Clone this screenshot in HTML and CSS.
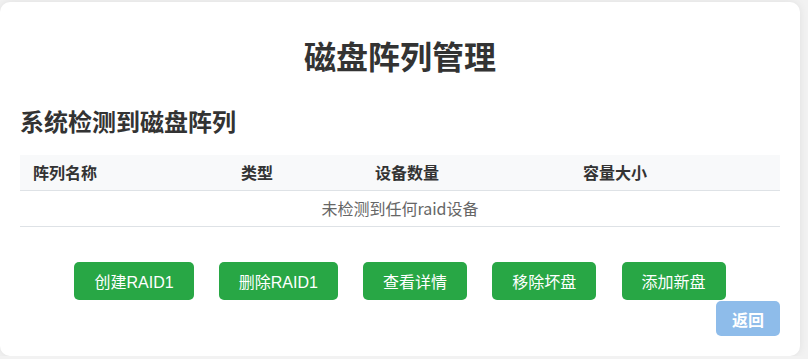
FILE: index.html
```html
<!DOCTYPE html>
<html lang="zh-CN">
<head>
  <meta charset="UTF-8" />
  <title>磁盘阵列管理</title>
  <link rel="stylesheet" href="styles.css">
</head>
<body>

  <div class="container">
    <h1>磁盘阵列管理</h1>

    <h2>系统检测到磁盘阵列</h2>

    <table class="raid-table">
      <thead>
        <tr>
          <th class="col-name">阵列名称</th>
          <th class="col-type">类型</th>
          <th class="col-count">设备数量</th>
          <th class="col-size">容量大小</th>
        </tr>
      </thead>
      <tbody>
        <tr>
          <td colspan="4" class="empty">未检测到任何raid设备</td>
        </tr>
      </tbody>
    </table>

    <div class="actions">
      <button class="btn">创建RAID1</button>
      <button class="btn">删除RAID1</button>
      <button class="btn">查看详情</button>
      <button class="btn">移除坏盘</button>
      <button class="btn">添加新盘</button>
    </div>

    <div class="footer-row">
      <button class="btn-back">返回</button>
    </div>
  </div>

</body>
</html>
```

FILE: styles.css
```css
body {
  margin: 0;
  font-family: "Noto Sans CJK SC", "Liberation Sans", sans-serif;
  background: #f2f2f2;
  color: #333;
}

.container {
  width: 800px;
  box-sizing: border-box;
  margin: 2px 0 0 0;
  padding: 20px;
  background: #fff;
  border-radius: 10px;
  box-shadow: 0 0 8px rgba(0, 0, 0, 0.08);
}

h1 {
  text-align: center;
  font-size: 32px;
  font-weight: bold;
  margin: 11px 0 26px;
  line-height: 1.4;
}

h2 {
  font-size: 24px;
  font-weight: bold;
  margin: 0 0 18px;
  line-height: 1.4;
}

.raid-table {
  width: 100%;
  border-collapse: collapse;
  font-size: 16px;
}

.raid-table th {
  background: #f8f9fa;
  text-align: left;
  font-weight: bold;
  padding: 6px 13px;
  line-height: 23px;
  border-bottom: 1px solid #dee2e6;
}

.col-name { width: 182px; }
.col-type { width: 108px; }
.col-count { width: 182px; }

.raid-table td {
  padding: 6px 12px;
  line-height: 23px;
  border-bottom: 1px solid #dee2e6;
}

.empty {
  text-align: center;
  color: #666;
}

.actions {
  text-align: center;
  margin-top: 35px;
  font-size: 0;
}

.btn {
  font-family: "Liberation Sans", "Noto Sans CJK SC", sans-serif;
  background: #28a745;
  color: #fff;
  border: none;
  border-radius: 5px;
  font-size: 16px;
  height: 38px;
  padding: 0 20px;
  margin: 0 12.6px;
  cursor: pointer;
}

.footer-row {
  display: flex;
  justify-content: flex-end;
}

.btn-back {
  font-family: "Noto Sans CJK SC", sans-serif;
  background: #8ebcea;
  color: #fff;
  font-weight: bold;
  border: none;
  border-radius: 5px;
  font-size: 16px;
  width: 64px;
  height: 35px;
  margin-top: 1px;
}
```
